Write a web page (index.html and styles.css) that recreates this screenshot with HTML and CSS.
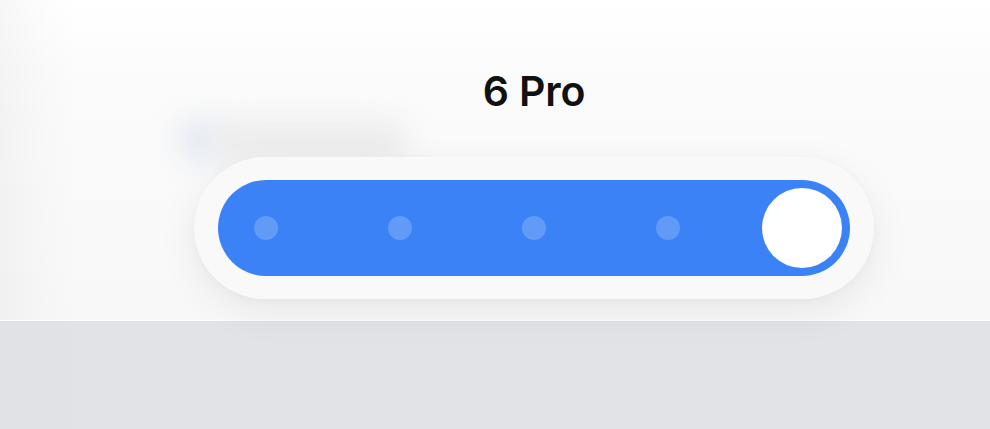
FILE: index.html
```html
<!DOCTYPE html>
<html>
<head>
<meta charset="utf-8">
<link rel="stylesheet" href="styles.css">
</head>
<body>
<div class="page">
  <aside class="side"></aside>
  <main class="stage">
    <div class="blur-blob blob-blue"></div>
    <div class="blur-blob blob-gray"></div>
    <h1 class="title">6 Pro</h1>
    <div class="pill">
      <div class="track">
        <span class="dot"></span>
        <span class="dot"></span>
        <span class="dot"></span>
        <span class="dot"></span>
        <span class="knob"></span>
      </div>
    </div>
  </main>
</div>
<div class="bottom">
  <div class="bottom-side"></div>
</div>
</body>
</html>
```

FILE: styles.css
```css
* { box-sizing: border-box; }
html, body { margin: 0; padding: 0; }
body {
  font-family: Inter, "Noto Sans", "Liberation Sans", sans-serif;
  background: #e2e3e6;
  width: 990px;
  height: 429px;
  overflow: hidden;
}
.page {
  display: flex;
  height: 321px;
  background: linear-gradient(180deg, #ffffff 0%, #fbfbfb 25%, #f8f8f8 100%);
  border-bottom: 1px solid #fdfdfd;
}
.side {
  width: 78px;
  flex: none;
  background: linear-gradient(90deg, rgba(0, 0, 0, 0.03) 0%, rgba(0, 0, 0, 0.012) 50%, rgba(0, 0, 0, 0) 100%);
}
.stage {
  position: relative;
  flex: 1;
  display: flex;
  flex-direction: column;
  align-items: center;
  padding-top: 68px;
}
.blur-blob {
  position: absolute;
  filter: blur(14px);
  border-radius: 30px;
}
.blob-blue {
  left: 100px;
  top: 118px;
  width: 44px;
  height: 44px;
  background: #e3e9f3;
}
.blob-gray {
  left: 130px;
  top: 120px;
  width: 200px;
  height: 44px;
  background: #ececec;
}
.title {
  position: relative;
  margin: 0;
  font-size: 41px;
  line-height: 46px;
  font-weight: 600;
  color: #111111;
  letter-spacing: -0.2px;
}
.pill {
  position: relative;
  margin-top: 43px;
  width: 680px;
  height: 142px;
  padding: 23px 24px;
  border-radius: 71px;
  background: #f9f9f9;
  box-shadow: 0 12px 40px rgba(0, 0, 0, 0.07), 0 2px 8px rgba(0, 0, 0, 0.03);
}
.track {
  height: 96px;
  border-radius: 48px;
  background: #3b82f6;
  display: flex;
  align-items: center;
  justify-content: space-between;
  padding: 0 8px;
}
.dot {
  width: 80px;
  height: 80px;
  display: flex;
  align-items: center;
  justify-content: center;
}
.dot::before {
  content: "";
  width: 24px;
  height: 24px;
  border-radius: 50%;
  background: rgba(255, 255, 255, 0.2);
}
.knob {
  width: 80px;
  height: 80px;
  border-radius: 50%;
  background: #ffffff;
}
.bottom {
  height: 108px;
  display: flex;
}
.bottom-side {
  width: 70px;
  background: #e1e2e5;
}
```
